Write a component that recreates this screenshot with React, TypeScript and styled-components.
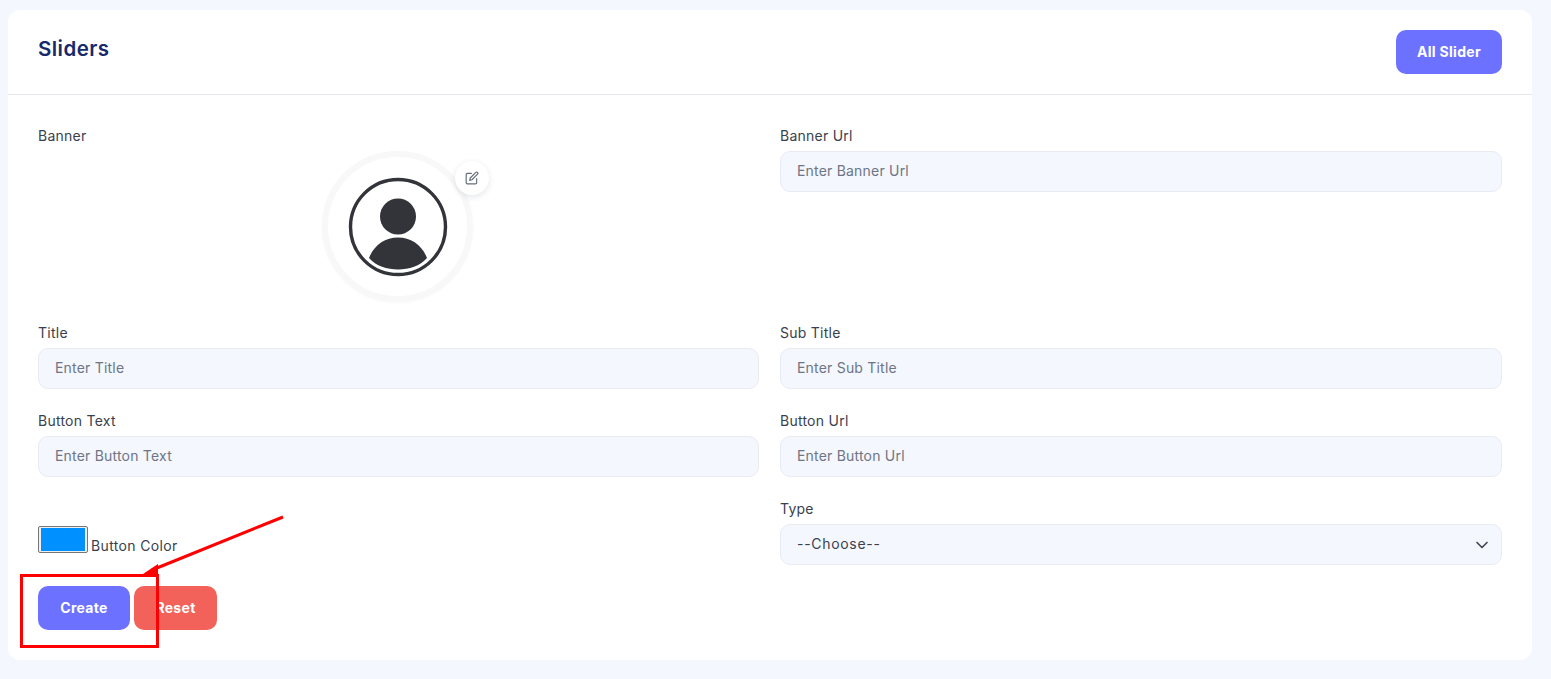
import * as React from 'react'
import styled, { createGlobalStyle } from 'styled-components'
import { ChevronDown } from 'lucide-react'
import { FiEdit } from 'react-icons/fi'

const fontStack = `Inter, "Open Sans", "Liberation Sans", sans-serif`

const GlobalStyle = createGlobalStyle`
  html, body {
    margin: 0;
    background-color: #f4f7fe;
    font-family: ${fontStack};
  }
  * {
    box-sizing: border-box;
  }
`

const Page = styled.div`
  position: relative;
  height: 679px;
  padding: 10px 19px 19px 8px;
  overflow: hidden;
`

const Card = styled.main`
  height: 650px;
  background-color: #fff;
  border-radius: 12px;
`

const CardHeader = styled.header`
  display: flex;
  justify-content: space-between;
  align-items: flex-start;
  height: 85px;
  padding: 20px 30px 0;
  border-bottom: 1px solid #e5e7ec;
`

const Title = styled.h1`
  margin: 0;
  padding-top: 6px;
  font-size: 20.5px;
  line-height: 26px;
  font-weight: 600;
  letter-spacing: 0.45px;
  color: #16296b;
`

const Button = styled.button<{ $tone?: 'primary' | 'danger'; $width: number }>`
  width: ${({ $width }) => $width}px;
  height: 44px;
  padding: 0 0 1px;
  border: 0;
  border-radius: 10px;
  background-color: ${({ $tone }) => ($tone === 'danger' ? '#f2625a' : '#6c72ff')};
  color: #fff;
  font-family: ${fontStack};
  font-size: 14px;
  font-weight: 700;
  letter-spacing: 0.3px;
`

const CardBody = styled.form`
  display: flex;
  flex-direction: column;
  gap: 21px;
  padding: 31px 30px 0;
`

const FormGrid = styled.div`
  display: grid;
  grid-template-columns: 721px 722px;
  column-gap: 21px;
  row-gap: 22px;
`

const Field = styled.div`
  display: flex;
  flex-direction: column;
  gap: 5px;
`

const Label = styled.label`
  font-size: 14px;
  line-height: 20px;
  letter-spacing: 0.25px;
  color: #39414f;
`

const TextInput = styled.input`
  width: 100%;
  height: 41px;
  padding: 0 16px 2px;
  border: 1px solid #e8ebf3;
  border-radius: 10px;
  background-color: #f4f7fe;
  font-family: ${fontStack};
  font-size: 14px;
  letter-spacing: 0.2px;
  color: #39414f;

  &::placeholder {
    color: #6e7585;
    opacity: 1;
  }
`

const SelectWrap = styled.div`
  position: relative;
`

const Select = styled.select`
  display: block;
  width: 100%;
  height: 41px;
  padding: 0 16px 2px;
  appearance: none;
  border: 1px solid #e8ebf3;
  border-radius: 10px;
  background-color: #f4f7fe;
  font-family: ${fontStack};
  font-size: 14px;
  letter-spacing: 0.7px;
  color: #39414f;
`

const SelectChevron = styled(ChevronDown)`
  position: absolute;
  top: 11px;
  right: 10px;
  color: #3f4654;
  pointer-events: none;
`

const AvatarSlot = styled.div`
  display: flex;
  justify-content: center;
  height: 150px;
  padding-right: 2px;
`

const AvatarFrame = styled.div`
  position: relative;
  display: flex;
  align-items: center;
  justify-content: center;
  width: 151px;
  height: 151px;
  border: 6px solid #f8f8f8;
  border-radius: 50%;
  box-shadow: 0 1px 3px rgba(0, 0, 0, 0.03);
`

const EditBadge = styled.span`
  position: absolute;
  top: 4px;
  right: -22px;
  display: flex;
  align-items: center;
  justify-content: center;
  width: 34px;
  height: 34px;
  border-radius: 50%;
  background-color: #fff;
  box-shadow: 0 2px 6px rgba(40, 50, 80, 0.12);
  color: #666d7a;
`

const ColorField = styled.div`
  display: flex;
  align-items: flex-end;
  gap: 3px;
  padding-bottom: 12px;
  align-self: end;
`

const ColorInput = styled.input`
  width: 50px;
  height: 27px;
  margin: 0;
  padding: 0;
  border: 1px solid #767676;
  border-radius: 2px;
  background-color: #efefef;

  &::-webkit-color-swatch-wrapper {
    padding: 1px 2px;
  }

  &::-webkit-color-swatch {
    border: 0;
  }
`

const ColorLabel = styled.label`
  font-size: 14px;
  line-height: 15px;
  letter-spacing: 0.35px;
  color: #39414f;
`

const Actions = styled.div`
  display: flex;
  gap: 4px;
`

const CalloutBox = styled.div`
  position: absolute;
  left: 20px;
  top: 574px;
  width: 139px;
  height: 74px;
  border: 3px solid #f00;
  pointer-events: none;
`

const CalloutArrow = styled.svg`
  position: absolute;
  left: 140px;
  top: 514px;
  pointer-events: none;
`

function AvatarIcon() {
  return (
    <svg width="100" height="100" viewBox="0 0 100 100" aria-hidden="true">
      <circle cx="50" cy="50" r="47.5" fill="none" stroke="#32343a" strokeWidth="3.4" />
      <circle cx="50" cy="39.500" r="18" fill="#32343a" />
      <path d="M21 81C26 68 37 60.500 50 60.500S74 68 79 81C72 89 61 92.500 50 92.500S28 89 21 81Z" fill="#32343a" />
    </svg>
  )
}

function TextField({ label, placeholder }: { label: string; placeholder: string }) {
  return (
    <Field>
      <Label>{label}</Label>
      <TextInput type="text" placeholder={placeholder} />
    </Field>
  )
}

export default function App() {
  return (
    <Page>
      <GlobalStyle />
      <Card>
        <CardHeader>
          <Title>Sliders</Title>
          <Button type="button" $width={106}>All Slider</Button>
        </CardHeader>
        <CardBody>
          <FormGrid>
            <Field>
              <Label>Banner</Label>
              <AvatarSlot>
                <AvatarFrame>
                  <AvatarIcon />
                  <EditBadge>
                    <FiEdit size={14} />
                  </EditBadge>
                </AvatarFrame>
              </AvatarSlot>
            </Field>
            <TextField label="Banner Url" placeholder="Enter Banner Url" />
            <TextField label="Title" placeholder="Enter Title" />
            <TextField label="Sub Title" placeholder="Enter Sub Title" />
            <TextField label="Button Text" placeholder="Enter Button Text" />
            <TextField label="Button Url" placeholder="Enter Button Url" />
            <ColorField>
              <ColorInput type="color" defaultValue="#0090ff" />
              <ColorLabel>Button Color</ColorLabel>
            </ColorField>
            <Field>
              <Label>Type</Label>
              <SelectWrap>
                <Select defaultValue="">
                  <option value="">--Choose--</option>
                </Select>
                <SelectChevron size={20} strokeWidth={2} />
              </SelectWrap>
            </Field>
          </FormGrid>
          <Actions>
            <Button type="button" $width={92}>Create</Button>
            <Button type="button" $tone="danger" $width={83}>Reset</Button>
          </Actions>
        </CardBody>
      </Card>
      <CalloutBox />
      <CalloutArrow width="146" height="62" viewBox="0 0 146 62" aria-hidden="true">
        <line x1="143" y1="3" x2="12" y2="56" stroke="#f00" strokeWidth="3" />
        <polygon points="3,60 18,50 18,60" fill="#f00" />
      </CalloutArrow>
    </Page>
  )
}
